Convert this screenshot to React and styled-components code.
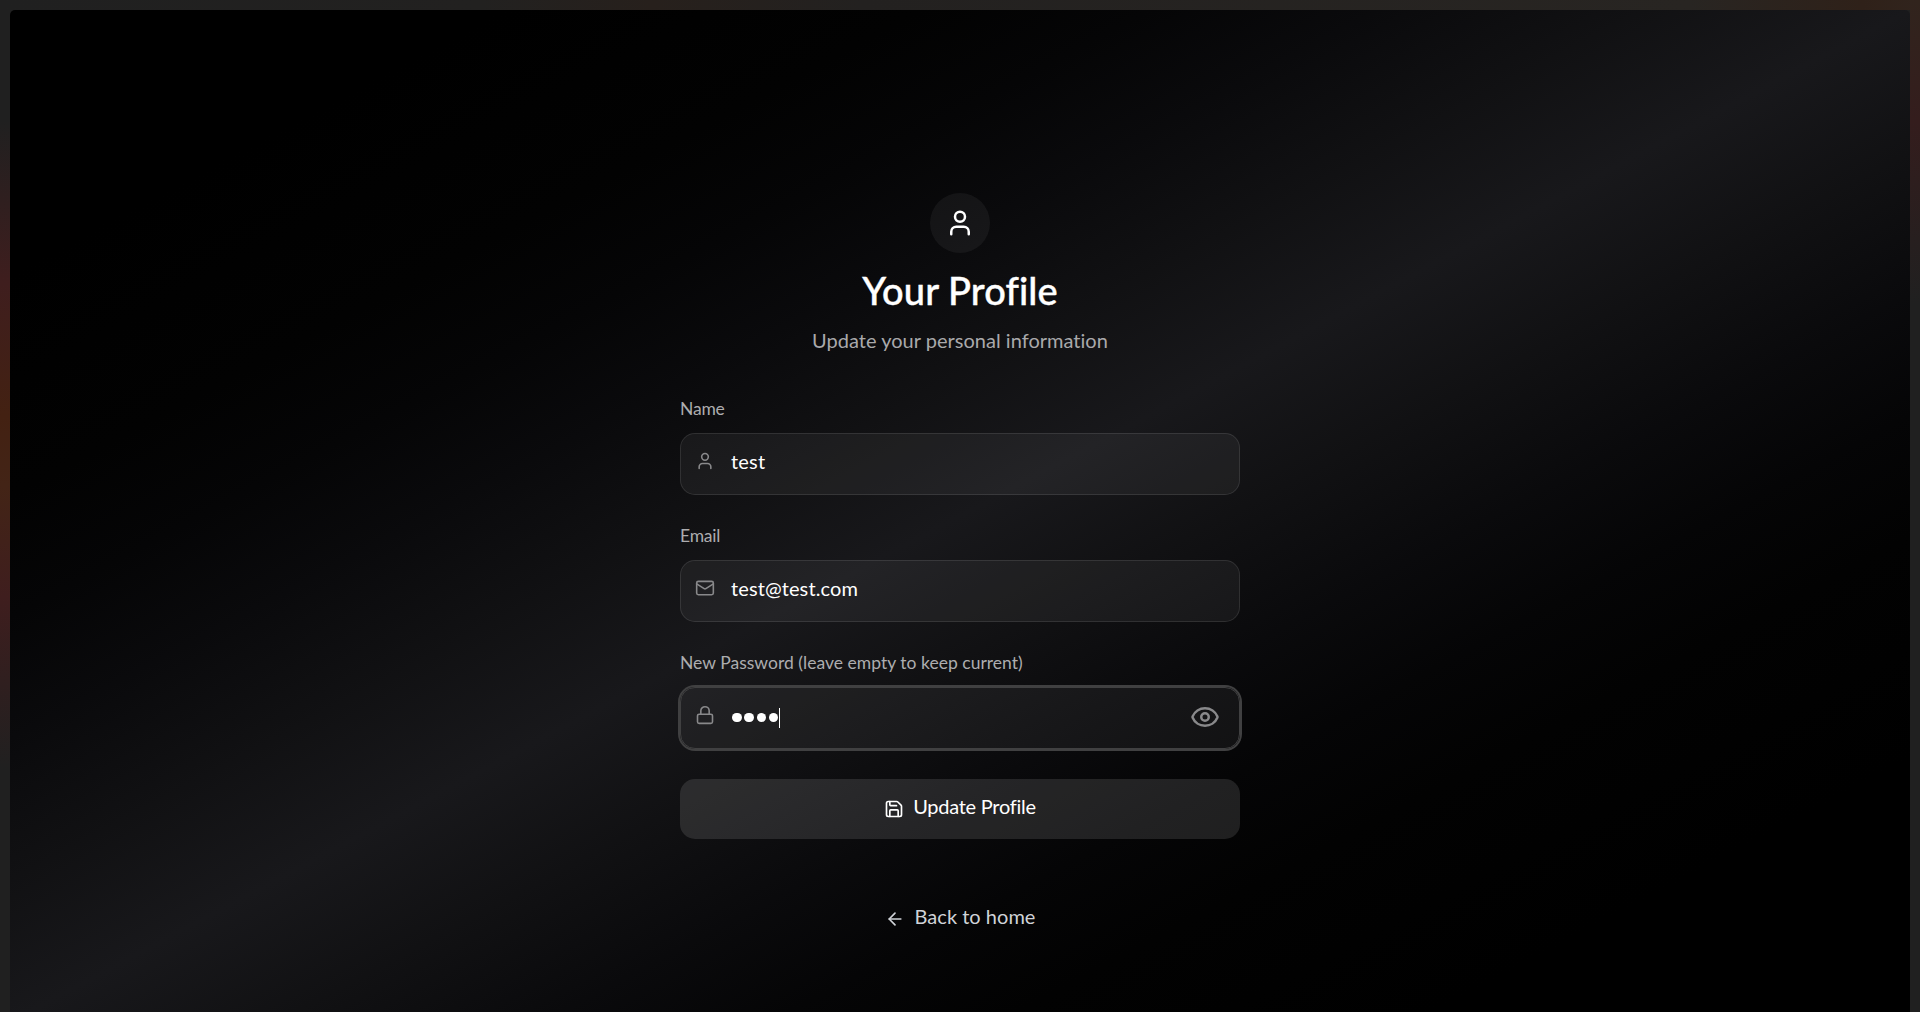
import React from 'react';
import styled, { createGlobalStyle } from 'styled-components';
import { User, Mail, Lock, Eye, Save, ArrowLeft } from 'lucide-react';

const GlobalStyle = createGlobalStyle`
  *, *::before, *::after { box-sizing: border-box; }
  body {
    margin: 0;
    overflow: hidden;
    background: #202020;
    font-family: Lato, "Open Sans", sans-serif;
    -webkit-font-smoothing: antialiased;
  }
`;

const Page = styled.div`
  height: 1012px;
  padding: 10px 10px 0;
  overflow: hidden;
  background:
    linear-gradient(180deg, rgba(32, 32, 32, 0) 12%, #3f1e1e 28%, #432112 41%, #432416 48%, #3f1e1e 59%, rgba(32, 32, 32, 0) 76%) 0 0 / 10px 100% no-repeat,
    linear-gradient(180deg, #31241d 0%, #341d1d 12%, rgba(32, 32, 32, 0) 30%) 100% 0 / 10px 100% no-repeat,
    linear-gradient(90deg, #202020 0%, #222120 25%, #27201c 34%, #232120 45%, #282522 88%, #2f2119 97%, #31241d 100%) 0 0 / 100% 10px no-repeat,
    #202020;
`;

const Card = styled.main`
  display: flex;
  flex-direction: column;
  align-items: center;
  height: 1012px;
  padding-top: 183px;
  border-radius: 5px;
  background: linear-gradient(
    to bottom right,
    #000 13%, #020202 24%, #050506 30%, #0a0a0c 36%, #111113 43%,
    #18181b 50%,
    #111113 57%, #0a0a0c 64%, #050506 70%, #020202 76%, #000 87%
  );
`;

const Avatar = styled.div`
  display: flex;
  align-items: center;
  justify-content: center;
  width: 60px;
  height: 60px;
  border-radius: 50%;
  background: rgba(255, 255, 255, 0.05);
  color: #fff;
`;

const Text = styled.span`
  letter-spacing: ${(p) => p.$track || 0}px;
  white-space: nowrap;
`;

const Title = styled.h1`
  margin: 14px 0 0;
  font-size: 38px;
  line-height: 46px;
  font-weight: 500;
  color: #fff;
  -webkit-text-stroke: 0.4px #fff;
`;

const Subtitle = styled.p`
  margin: 12px 0 0;
  font-size: 20px;
  line-height: 30px;
  color: #a9a9ab;
`;

const Form = styled.form`
  display: flex;
  flex-direction: column;
  width: 560px;
  margin-top: 40px;
`;

const Field = styled.div`
  display: flex;
  flex-direction: column;
  gap: 11px;
  height: ${(p) => (p.$last ? 100 : 127)}px;
`;

const Label = styled.label`
  font-size: 17.5px;
  line-height: 27px;
  color: #adadaf;
`;

const InputBox = styled.div`
  display: flex;
  align-items: center;
  height: 62px;
  padding: 0 19px 0 14px;
  border: 1px solid ${(p) => (p.$focused ? '#404041' : 'rgba(255, 255, 255, 0.1)')};
  border-radius: 15px;
  background: rgba(255, 255, 255, 0.05);
  box-shadow: ${(p) => (p.$focused ? '0 0 0 2px #404041' : 'none')};
  color: #fff;
  font-size: 20px;
  line-height: 30px;

  > svg:first-child {
    margin: 0 16px 6px 0;
    color: #89898b;
    flex: none;
  }
`;

const Value = styled.div`
  display: flex;
  flex: 1;
  align-items: center;
  margin-top: ${(p) => (p.$masked ? -1 : -6)}px;
`;

const Dot = styled.i`
  width: 9.4px;
  height: 9.4px;
  margin: 0 1.35px;
  border-radius: 50%;
  background: #fff;
`;

const Caret = styled.i`
  width: 1px;
  height: 20px;
  background: #fff;
`;

const Reveal = styled.button`
  display: flex;
  margin-top: -2px;
  padding: 0;
  border: 0;
  background: none;
  color: #89898b;
`;

const Submit = styled.button`
  display: flex;
  align-items: center;
  justify-content: center;
  gap: 10px;
  height: 60px;
  margin-top: 30px;
  padding: 0;
  border: 0;
  border-radius: 15px;
  background: rgba(255, 255, 255, 0.115);
  color: #fff;
  font-family: inherit;
  font-size: 20px;
  line-height: 30px;
  font-weight: 400;

  > span { margin: -6px 0 0 -1px; }
`;

const Back = styled.a`
  display: flex;
  align-items: center;
  gap: 10px;
  margin-top: 62px;
  color: #d0d3d8;
  font-size: 20px;
  line-height: 30px;

  > svg { margin-top: 5px; }
`;

export default function App() {
  return (
    <>
      <GlobalStyle />
      <Page>
        <Card>
          <Avatar><User size={30} /></Avatar>
          <Title><Text $track={0.1}>Your Profile</Text></Title>
          <Subtitle><Text $track={0.02}>Update your personal information</Text></Subtitle>
          <Form>
            <Field>
              <Label><Text $track={-0.2}>Name</Text></Label>
              <InputBox>
                <User size={20} strokeWidth={1.9} />
                <Value><Text $track={0.2}>test</Text></Value>
              </InputBox>
            </Field>
            <Field>
              <Label><Text $track={-0.2}>Email</Text></Label>
              <InputBox>
                <Mail size={20} strokeWidth={1.9} />
                <Value><Text $track={0.1}>test@test.com</Text></Value>
              </InputBox>
            </Field>
            <Field $last>
              <Label><Text $track={0.02}>New Password (leave empty to keep current)</Text></Label>
              <InputBox $focused>
                <Lock size={20} strokeWidth={1.9} />
                <Value $masked>
                  <Dot /><Dot /><Dot /><Dot /><Caret />
                </Value>
                <Reveal type="button" aria-label="Show password"><Eye size={30} /></Reveal>
              </InputBox>
            </Field>
            <Submit type="button">
              <Save size={20} />
              <Text $track={-0.27}>Update Profile</Text>
            </Submit>
          </Form>
          <Back>
            <ArrowLeft size={20} />
            <Text $track={0.02}>Back to home</Text>
          </Back>
        </Card>
      </Page>
    </>
  );
}
